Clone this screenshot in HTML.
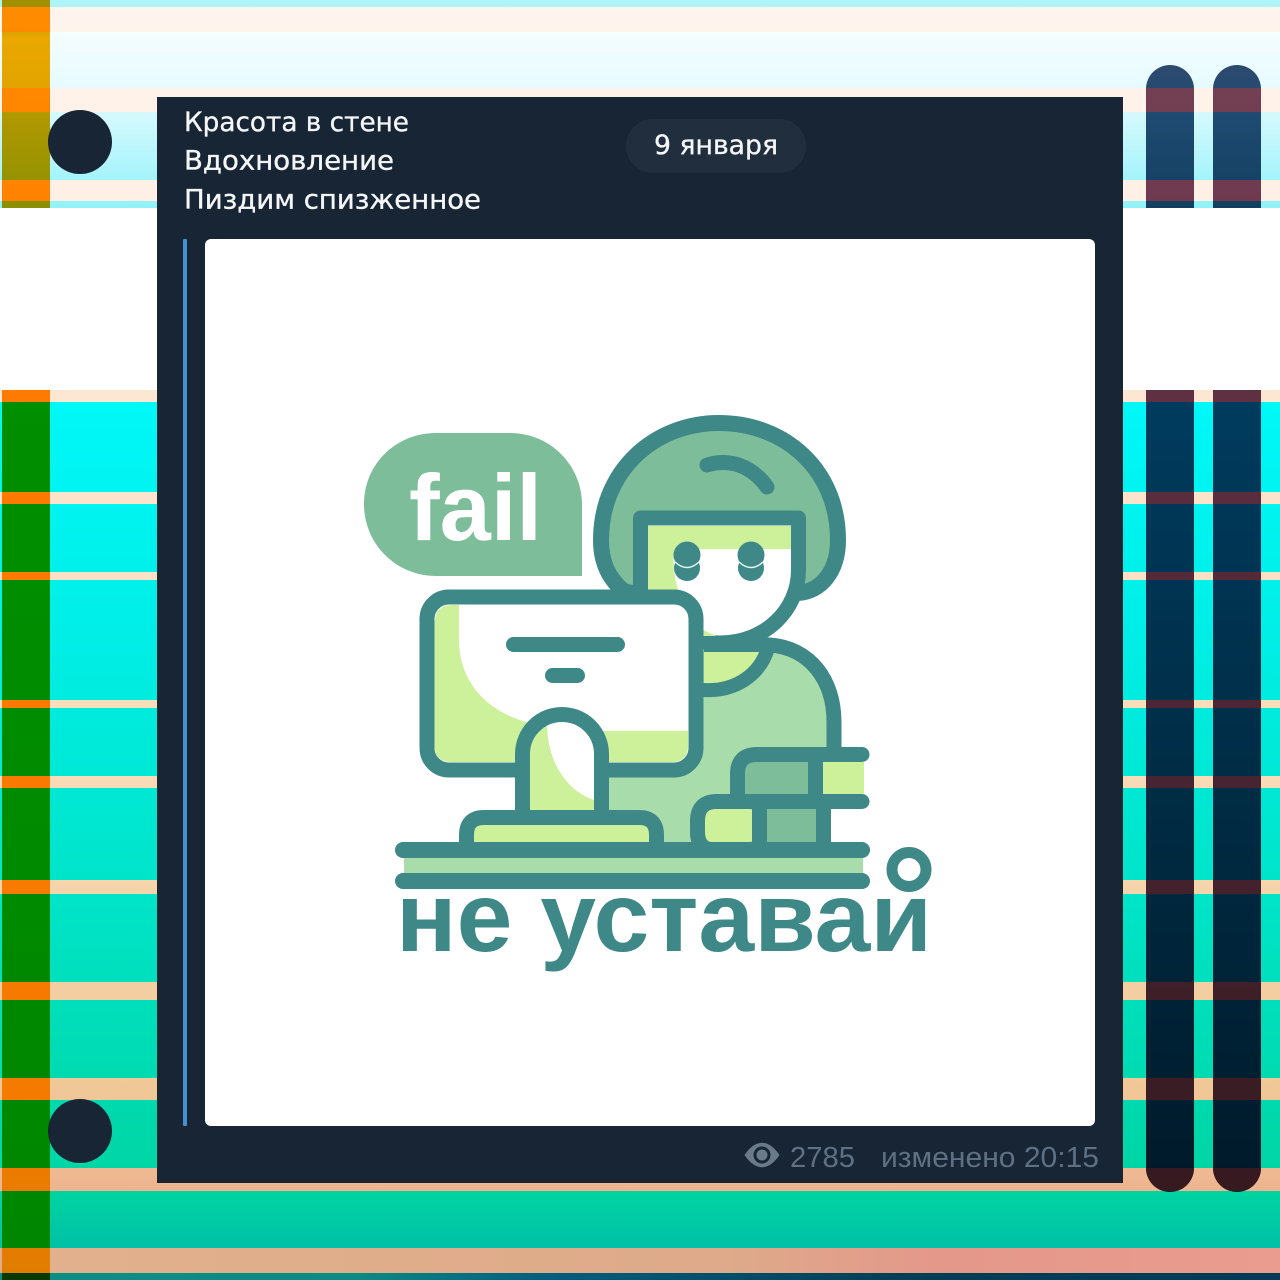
<!DOCTYPE html>
<html lang="ru">
<head>
<meta charset="utf-8">
<title>не уставай</title>
<style>
html,body{margin:0;padding:0;background:#fff;width:1280px;height:1280px;overflow:hidden}
svg{display:block}
.t{font-family:"DejaVu Sans","Liberation Sans",sans-serif;font-size:27px;fill:#f4f6f8;stroke:#f4f6f8;stroke-width:.35}
.m{font-family:"Liberation Sans",sans-serif;font-size:29px;fill:#5f7083}
.logo{font-family:"Liberation Sans",sans-serif;font-weight:700}
</style>
</head>
<body>
<svg width="1280" height="1280" viewBox="0 0 1280 1280" xmlns="http://www.w3.org/2000/svg">
<defs>
<linearGradient id="base" gradientUnits="userSpaceOnUse" x1="0" y1="0" x2="0" y2="1280">
<stop offset="0.005" stop-color="#aef5fa"/><stop offset="0.02" stop-color="#f6fdff"/><stop offset="0.07" stop-color="#e6fbff"/><stop offset="0.09" stop-color="#d4f9fd"/><stop offset="0.14" stop-color="#a4f4fb"/><stop offset="0.163" stop-color="#90f3f9"/>
<stop offset="0.31" stop-color="#00f8f8"/><stop offset="0.5" stop-color="#00eee6"/><stop offset="0.7" stop-color="#00e4c8"/><stop offset="0.85" stop-color="#00dab0"/><stop offset="0.93" stop-color="#00d4a2"/><stop offset="0.98" stop-color="#00bfa6"/>
</linearGradient>
<linearGradient id="peach" gradientUnits="userSpaceOnUse" x1="0" y1="0" x2="0" y2="1280">
<stop offset="0" stop-color="#fff5ee"/><stop offset="0.16" stop-color="#ffefe4"/><stop offset="0.31" stop-color="#fde6d2"/><stop offset="0.6" stop-color="#f8dcb8"/><stop offset="0.85" stop-color="#f0c898"/><stop offset="0.93" stop-color="#eeb590"/><stop offset="1" stop-color="#e2a88c"/>
</linearGradient>
<linearGradient id="lastBand" gradientUnits="userSpaceOnUse" x1="50" y1="0" x2="1280" y2="0">
<stop offset="0" stop-color="#e2b08c"/><stop offset="0.55" stop-color="#deaa8a"/><stop offset="0.72" stop-color="#e4988a"/><stop offset="1" stop-color="#ea9c8e"/>
</linearGradient>
<linearGradient id="leftBase" gradientUnits="userSpaceOnUse" x1="0" y1="0" x2="0" y2="1280">
<stop offset="0.005" stop-color="#a09000"/><stop offset="0.03" stop-color="#eaa800"/><stop offset="0.07" stop-color="#e2a400"/><stop offset="0.09" stop-color="#b09800"/><stop offset="0.163" stop-color="#8a9000"/><stop offset="0.3" stop-color="#008f00"/><stop offset="1" stop-color="#008600"/>
</linearGradient>
<linearGradient id="leftPeach" gradientUnits="userSpaceOnUse" x1="0" y1="0" x2="0" y2="1280">
<stop offset="0" stop-color="#ff8c00"/><stop offset="0.3" stop-color="#ff7a00"/><stop offset="0.85" stop-color="#f57a00"/><stop offset="1" stop-color="#df7d00"/>
</linearGradient>
<linearGradient id="barBase" gradientUnits="userSpaceOnUse" x1="0" y1="0" x2="0" y2="1280">
<stop offset="0.05" stop-color="#2d4a6e"/><stop offset="0.09" stop-color="#1f4a72"/><stop offset="0.163" stop-color="#123f5f"/><stop offset="0.31" stop-color="#003b5e"/><stop offset="0.6" stop-color="#002d46"/><stop offset="0.92" stop-color="#001a2a"/>
</linearGradient>
<linearGradient id="barPeach" gradientUnits="userSpaceOnUse" x1="0" y1="0" x2="0" y2="1280">
<stop offset="0.07" stop-color="#733f52"/><stop offset="0.16" stop-color="#6f3a50"/><stop offset="0.31" stop-color="#5e3042"/><stop offset="0.6" stop-color="#482432"/><stop offset="0.93" stop-color="#361a20"/>
</linearGradient>
<linearGradient id="strip" gradientUnits="userSpaceOnUse" x1="0" y1="0" x2="1280" y2="0">
<stop offset="0.04" stop-color="#0a8f85"/><stop offset="0.28" stop-color="#0a8a84"/><stop offset="0.42" stop-color="#005f80"/><stop offset="0.7" stop-color="#003f58"/><stop offset="1" stop-color="#003a58"/>
</linearGradient>
<clipPath id="bands">
<path d="M0 7H1280V32H0ZM0 88H1280V112H0ZM0 180H1280V201H0ZM0 390H1280V402H0ZM0 492H1280V504H0ZM0 572H1280V580H0ZM0 700H1280V708H0ZM0 776H1280V788H0ZM0 880H1280V894H0ZM0 982H1280V1000H0ZM0 1078H1280V1100H0ZM0 1168H1280V1191H0ZM0 1248H1280V1273H0Z"/>
</clipPath>
<clipPath id="bars">
<path d="M1146 390H1194V1168a24 24 0 0 1-48 0ZM1213 390H1261V1168a24 24 0 0 1-48 0ZM1146 208V89a24 24 0 0 1 48 0V208ZM1213 208V89a24 24 0 0 1 48 0V208Z"/>
</clipPath>
</defs>

<!-- striped background -->
<rect width="1280" height="1280" fill="url(#base)"/>
<rect width="1280" height="1280" fill="url(#peach)" clip-path="url(#bands)"/>
<rect x="50" y="1248" width="1230" height="25" fill="url(#lastBand)"/>
<rect x="2" width="48" height="1280" fill="url(#leftBase)"/>
<g clip-path="url(#bands)"><rect x="2" width="48" height="1280" fill="url(#leftPeach)"/></g>
<rect y="1273" width="1280" height="7" fill="url(#strip)"/>
<rect x="2" y="1273" width="48" height="7" fill="#063a06"/>
<g clip-path="url(#bars)">
<rect x="1140" width="130" height="1280" fill="url(#barBase)"/>
<g clip-path="url(#bands)"><rect x="1140" width="130" height="1280" fill="url(#barPeach)"/></g>
</g>
<rect y="208" width="1280" height="182" fill="#fff"/>
<circle cx="80" cy="142" r="32" fill="#182534"/>
<circle cx="80" cy="1131" r="32" fill="#182534"/>

<!-- card -->
<rect x="157" y="97" width="966" height="1086" fill="#182534"/>
<text class="t" x="184" y="131" textLength="225" lengthAdjust="spacingAndGlyphs">Красота в стене</text>
<text class="t" x="184" y="169.500" textLength="210" lengthAdjust="spacingAndGlyphs">Вдохновление</text>
<text class="t" x="184" y="208.500" textLength="297" lengthAdjust="spacingAndGlyphs">Пиздим спизженное</text>
<rect x="626" y="119" width="180" height="54" rx="27" fill="#202e3d"/>
<text class="t" x="654" y="154" textLength="124" lengthAdjust="spacingAndGlyphs">9 января</text>
<rect x="183" y="239" width="4" height="887" rx="1" fill="#4490d0"/>
<rect x="205" y="239" width="890" height="887" rx="6" fill="#fff"/>

<!-- footer -->
<path d="M746 1155C751 1148 756 1144 762 1144C768 1144 773 1148 778 1155C773 1162 768 1166 762 1166C756 1166 751 1162 746 1155Z" fill="#6b7a88" stroke="#6b7a88" stroke-width="2.500" stroke-linejoin="round"/>
<circle cx="762" cy="1155" r="8.500" fill="#182534"/>
<circle cx="762" cy="1155" r="5.500" fill="#6b7a88"/>
<text class="m" x="790" y="1167" textLength="65" lengthAdjust="spacingAndGlyphs">2785</text>
<text class="m" x="881" y="1167" textLength="218" lengthAdjust="spacingAndGlyphs">изменено 20:15</text>

<!-- illustration -->
<path d="M582 576H436C396 576 364 544 364 504C364 464 396 433 436 433H510C550 433 582 465 582 505Z" fill="#7dbd9a"/>
<text class="logo" x="409" y="540" font-size="94" fill="#fff" textLength="133" lengthAdjust="spacingAndGlyphs">fail</text>

<!-- head -->
<path d="M625 592C607 578 601 560 601 540C601 470 655 423 719 423C785 423 838 470 838 540C838 570 822 592 797 593L700 600Z" fill="#7dbd9a" stroke="#3e8888" stroke-width="16" stroke-linejoin="round"/>
<path d="M707 465C730 458 752 466 767 487" fill="none" stroke="#3e8888" stroke-width="15" stroke-linecap="round"/>
<!-- body -->
<path d="M670 648H770C810 648 834 680 834 722V845H609V765H670Z" fill="#a8dcaa"/>
<path d="M704 645H770C810 648 834 680 834 722V752" fill="none" stroke="#3e8888" stroke-width="15"/>
<path d="M704 652H764C756 672 735 684 704 684Z" fill="#cdf09a"/>
<path d="M703 690C735 692 760 675 768 648" fill="none" stroke="#3e8888" stroke-width="14"/>
<!-- face -->
<path d="M640.500 600V518H798.500V570C798.500 610 765 643 720 643C680 643 640.500 620 640.500 600Z" fill="#fff" stroke="#3e8888" stroke-width="15" stroke-linejoin="round"/>
<path d="M648 526H791V549H675C672 560 674 580 680 595H648Z" fill="#cdf09a"/>
<path d="M703 630L716 636H703Z" fill="#cdf09a"/>
<circle cx="687" cy="568" r="13" fill="#3e8888"/><circle cx="751" cy="568" r="13" fill="#3e8888"/>
<circle cx="687" cy="555" r="13.500" fill="#3e8888"/><circle cx="751" cy="555" r="13.500" fill="#3e8888"/>
<path d="M675 562Q687 573 699 562" fill="none" stroke="#e8f5ee" stroke-width="1.500"/>
<path d="M739 562Q751 573 763 562" fill="none" stroke="#e8f5ee" stroke-width="1.500"/>
<!-- books -->
<rect x="823" y="762" width="41" height="32" fill="#cdf09a"/>
<rect x="745" y="762" width="64" height="32" fill="#7dbd9a"/>
<rect x="705" y="809" width="48" height="33" rx="4" fill="#cdf09a"/>
<rect x="767" y="809" width="50" height="33" fill="#7dbd9a"/>
<rect x="831" y="809" width="34" height="33" fill="#fff"/>
<path d="M862 754.500H757Q737.500 754.500 737.500 774V801" fill="none" stroke="#3e8888" stroke-width="15" stroke-linecap="round"/>
<path d="M862 801.500H717Q697.500 801.500 697.500 821V832Q697.500 850 715 850" fill="none" stroke="#3e8888" stroke-width="15" stroke-linecap="round"/>
<rect x="808" y="754" width="15" height="48" fill="#3e8888"/>
<rect x="752" y="802" width="15" height="44" fill="#3e8888"/>
<rect x="816" y="802" width="15" height="44" fill="#3e8888"/>
<!-- monitor -->
<rect x="427" y="597" width="269" height="173" rx="22" fill="#fff" stroke="#3e8888" stroke-width="15"/>
<path d="M434.500 625Q434.500 605 452 605H459V640C459 680 485 712 530 723V762H452Q434.500 762 434.500 745Z" fill="#cdf09a"/>
<path d="M600 731H688V745Q688 762 672 762H600Z" fill="#cdf09a"/>
<rect x="506" y="637" width="119" height="15" rx="7.500" fill="#3e8888"/>
<rect x="545" y="668" width="40" height="15" rx="7.500" fill="#3e8888"/>
<!-- stand -->
<path d="M522.500 815V754A39.500 39.500 0 0 1 601.500 754V815Z" fill="#fff"/>
<path d="M530 815V750C534 730 540 725 547 723C547 760 565 790 594 800V815Z" fill="#cdf09a"/>
<path d="M522.500 815V754A39.500 39.500 0 0 1 601.500 754V815" fill="none" stroke="#3e8888" stroke-width="15"/>
<path d="M466.500 848V835Q466.500 817.500 484 817.500H639Q656.500 817.500 656.500 835V848" fill="#cdf09a" stroke="#3e8888" stroke-width="15"/>
<!-- desk -->
<rect x="404" y="856" width="459" height="18" fill="#a8dcaa"/>
<rect x="395" y="842" width="475" height="16" rx="8" fill="#3e8888"/>
<rect x="395" y="873" width="475" height="16" rx="8" fill="#3e8888"/>
<!-- caption -->
<text class="logo" x="396" y="951" font-size="98" fill="#3e8888" textLength="536" lengthAdjust="spacingAndGlyphs">не уставай</text>
<rect x="876" y="860" width="60" height="38" fill="#fff"/>
<circle cx="909" cy="869.500" r="17" fill="none" stroke="#3e8888" stroke-width="11"/>
</svg>
</body>
</html>
